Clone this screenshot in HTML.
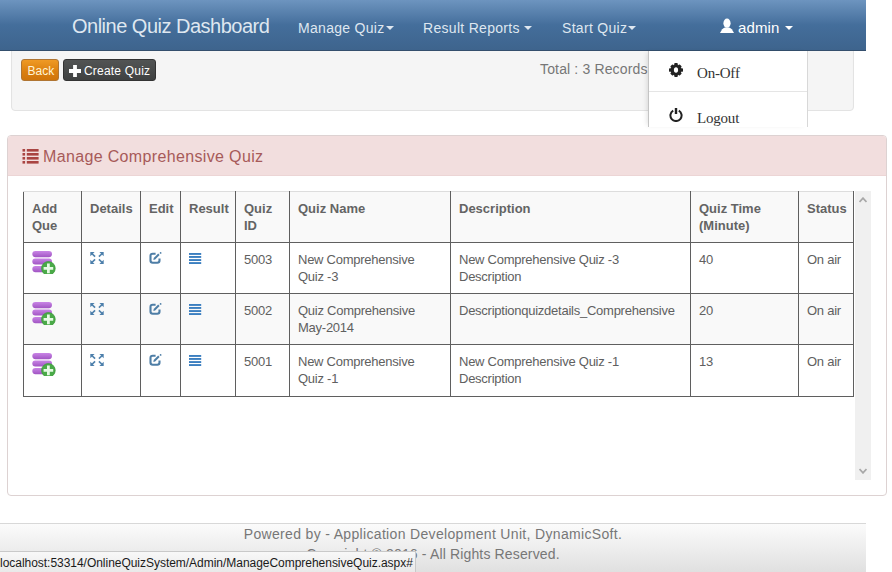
<!DOCTYPE html>
<html><head><meta charset="utf-8">
<style>
*{box-sizing:border-box;}
html,body{margin:0;padding:0;background:#fff;width:892px;height:572px;overflow:hidden;position:relative;font-family:"Liberation Sans",sans-serif;}
.abs{position:absolute;}
svg{position:absolute;display:block;}
#nav{left:0;top:0;width:866px;height:51px;background:linear-gradient(#6d94bf,#446e9b 50%,#3e648d);border-bottom:1px solid #344f6d;z-index:5;}
.nt{position:absolute;white-space:nowrap;color:#dfe7f0;font-size:14px;line-height:14px;letter-spacing:0.3px;}
.caret{position:absolute;width:0;height:0;border-left:4px solid transparent;border-right:4px solid transparent;border-top:4px solid #dfe7f0;}
#well{left:11px;top:40px;width:843px;height:71px;background:#f5f5f5;border:1px solid #e3e3e3;border-radius:4px;box-shadow:inset 0 1px 1px rgba(0,0,0,.05);}
.btn{position:absolute;height:22px;border-radius:3px;font-size:12px;line-height:20px;color:#fff;white-space:nowrap;}
#back{left:21px;top:59px;width:38px;background:linear-gradient(#ef9a25,#dc8010 55%,#cf740a);border:1px solid #b07532;color:#fff4d6;}
#create{left:63px;top:59px;width:93px;background:linear-gradient(#525454,#474949 60%,#3f4141);border:1px solid #333;}
#drop{left:648px;top:51px;width:160px;height:76px;background:#fff;border:1px solid rgba(0,0,0,.15);border-top:none;border-bottom:none;border-left-color:#c4c4c4;border-right-color:#d8d8d8;box-shadow:-3px 0 5px -2px rgba(0,0,0,.12);z-index:6;}
.dt{position:absolute;font-family:"Liberation Serif",serif;font-size:15px;line-height:15px;color:#333;white-space:nowrap;letter-spacing:-0.2px;}
#panel{left:7px;top:135px;width:880px;height:361px;border:1px solid #ddd2d2;border-radius:4px;background:#fff;}
#ph{position:absolute;left:0;top:0;width:878px;height:40px;background:#f2dede;border-bottom:1px solid #ecd5d5;border-radius:3px 3px 0 0;}
#scroll{left:855px;top:191px;width:16px;height:289px;background:#f0f0f0;}
table{position:absolute;left:23px;top:191px;width:831px;border-collapse:collapse;table-layout:fixed;}
td,th{border:1px solid #5f5f5f;padding:8px 8px 0 8px;vertical-align:top;text-align:left;font-size:13px;line-height:17px;color:#606060;}
td{letter-spacing:-0.25px;}
th{font-weight:bold;color:#646464;}
tr.h th{border-top-color:#ddd;}
#footer{left:0;top:523px;width:866px;height:49px;border-top:1px solid #d8d8d8;background:linear-gradient(#fbfbfb,#e0e0e0);}
.ft{position:absolute;left:0;width:866px;text-align:center;font-size:14px;line-height:20px;color:#777;white-space:nowrap;letter-spacing:0.33px;}
#status{left:0;top:551px;width:416px;height:21px;background:linear-gradient(#f8f8f8,#e9e9e9);border-top:1px solid #c9c9c9;border-right:1px solid #c9c9c9;font-size:12px;line-height:22px;color:#1a1a1a;white-space:nowrap;letter-spacing:-0.03px;}
</style></head>
<body>
<svg width="0" height="0" style="position:absolute">
  <defs>
    <linearGradient id="pg" x1="0" y1="0" x2="0" y2="1"><stop offset="0" stop-color="#c985e6"/><stop offset="1" stop-color="#a155c3"/></linearGradient>
    <g id="addq">
      <rect x="0.3" y="1" width="19.7" height="6.2" rx="3.1" fill="url(#pg)"/>
      <rect x="0.3" y="8.5" width="19.7" height="6.1" rx="3" fill="url(#pg)"/>
      <rect x="0.3" y="15.9" width="19.7" height="6.3" rx="3.1" fill="url(#pg)"/>
      <circle cx="16.4" cy="18.4" r="6.8" fill="#4aaa48"/>
      <circle cx="16.4" cy="18.4" r="6.8" fill="none" stroke="#3f9a3e" stroke-width="0.8"/><path d="M15 13.6h2.8v3.4h3.4v2.8h-3.4v3.4h-2.8v-3.4h-3.4v-2.8h3.4z" fill="#e6fae4"/>
    </g>
    <g id="expd" fill="#4c7fab" stroke="#4c7fab" stroke-width="1.6">
      <path d="M0 0H4.3L0 4.3Z" stroke="none"/><path d="M1.5 1.5L4.8 4.6" fill="none"/>
      <path d="M13.4 0H9.1L13.4 4.3Z" stroke="none"/><path d="M11.9 1.5L8.6 4.6" fill="none"/>
      <path d="M0 12H4.3L0 7.7Z" stroke="none"/><path d="M1.5 10.5L4.8 7.4" fill="none"/>
      <path d="M13.4 12H9.1L13.4 7.7Z" stroke="none"/><path d="M11.9 10.5L8.6 7.4" fill="none"/>
    </g>
    <g id="edt">
      <path d="M6.6 1.7H3.7Q1.5 1.7 1.5 3.9V8.6Q1.5 10.8 3.7 10.8H8.3Q10.5 10.8 10.5 8.6V6.4" fill="none" stroke="#4e7ea6" stroke-width="2.1"/>
      <path d="M4.4 8.1L4.7 6.1L9.2 1.6L10.6 3L6.1 7.5Z" fill="#4e7ea6"/>
      <circle cx="11.6" cy="0.9" r="0.9" fill="#4e7ea6"/>
    </g>
    <g id="lst" fill="#3b7fc0">
      <rect x="0" y="0" width="12.2" height="1.9"/><rect x="0" y="3" width="12.2" height="1.9"/><rect x="0" y="6.1" width="12.2" height="1.9"/><rect x="0" y="9.1" width="12.2" height="1.9"/>
    </g>
  </defs>
</svg>
<div id="nav" class="abs">
  <div class="nt" style="left:72px;top:16px;font-size:20px;line-height:20px;letter-spacing:-0.5px;">Online Quiz Dashboard</div>
  <div class="nt" style="left:298px;top:21px;">Manage Quiz</div><div class="caret" style="left:386px;top:26px;"></div>
  <div class="nt" style="left:423px;top:21px;">Result Reports</div><div class="caret" style="left:524px;top:26px;"></div>
  <div class="nt" style="left:562px;top:21px;">Start Quiz</div><div class="caret" style="left:628px;top:26px;"></div>
  <svg style="left:719px;top:18px" width="16" height="16" viewBox="0 0 16 16"><ellipse cx="8" cy="5.2" rx="3.6" ry="4.6" fill="#fff"/><path d="M1 15 L3.2 11.2 Q5 9.6 6 9.5 L10 9.5 Q11 9.6 12.8 11.2 L15 15 Z" fill="#fff"/></svg>
  <div class="nt" style="left:738px;top:20px;color:#fff;font-size:15px;line-height:15px;letter-spacing:0.1px;">admin</div><div class="caret" style="left:785px;top:26px;border-top-color:#fff;"></div>
</div>
<div id="well" class="abs"></div>
<div id="back" class="btn"><span class="abs" style="left:5.5px;top:1px;">Back</span></div>
<div id="create" class="btn">
  <svg style="left:5px;top:5px" width="12" height="12" viewBox="0 0 12 12"><path d="M4.1 0H7.9V4.1H12V7.9H7.9V12H4.1V7.9H0V4.1H4.1Z" fill="#fff"/></svg>
  <span class="abs" style="left:20px;top:1px;letter-spacing:0.2px;">Create Quiz</span></div>
<div class="abs" style="left:540px;top:62px;font-size:14px;line-height:14px;color:#777;white-space:nowrap;letter-spacing:0.15px;">Total : 3 Records</div>
<div id="drop" class="abs">
  <svg style="left:20px;top:12px" width="14" height="14" viewBox="0 0 14 14"><g fill="#222"><circle cx="7" cy="7" r="5.3"/><rect x="5.2" y="0" width="3.6" height="14" rx=".9"/><rect x="0" y="5.2" width="14" height="3.6" rx=".9"/><rect x="5.2" y="0.4" width="3.6" height="13.2" rx=".9" transform="rotate(45 7 7)"/><rect x="5.2" y="0.4" width="3.6" height="13.2" rx=".9" transform="rotate(-45 7 7)"/></g><ellipse cx="7" cy="7" rx="2.1" ry="2.8" fill="#fff"/></svg>
  <div class="dt" style="left:48px;top:15px;">On-Off</div>
  <div class="abs" style="left:0;top:40px;width:158px;height:1px;background:#e5e5e5;"></div>
  <svg style="left:20px;top:57px" width="14" height="14" viewBox="0 0 14 14"><path d="M4.2 2.6 A5.6 5.6 0 1 0 9.8 2.6" fill="none" stroke="#222" stroke-width="2"/><rect x="5.8" y="0" width="2.4" height="6" fill="#222"/></svg>
  <div class="dt" style="left:48px;top:60px;">Logout</div>
</div>
<div id="panel" class="abs">
  <div id="ph">
    <svg style="left:14px;top:12px" width="18" height="16" viewBox="0 0 18 16"><g fill="#a94442"><rect x="0.5" y="1" width="2.6" height="2.6"/><rect x="4.8" y="1" width="11.8" height="2.6"/><rect x="0.5" y="5" width="2.6" height="2.6"/><rect x="4.8" y="5" width="11.8" height="2.6"/><rect x="0.5" y="9" width="2.6" height="2.6"/><rect x="4.8" y="9" width="11.8" height="2.6"/><rect x="0.5" y="13" width="2.6" height="2.6"/><rect x="4.8" y="13" width="11.8" height="2.6"/></g></svg>
    <div class="abs" style="left:35px;top:13px;font-size:16px;line-height:16px;color:#a75a59;white-space:nowrap;letter-spacing:0.35px;">Manage Comprehensive Quiz</div></div>
</div>
<div id="scroll" class="abs">
  <svg style="left:4px;top:6px" width="8" height="6" viewBox="0 0 8 6"><path d="M0.5 5L4 1.2L7.5 5" fill="none" stroke="#a8a8a8" stroke-width="1.8"/></svg>
  <svg style="left:4px;top:277px" width="8" height="6" viewBox="0 0 8 6"><path d="M0.5 1L4 4.8L7.5 1" fill="none" stroke="#a8a8a8" stroke-width="1.8"/></svg>
</div>
<table>
<colgroup><col style="width:58px"><col style="width:59px"><col style="width:40px"><col style="width:55px"><col style="width:54px"><col style="width:161px"><col style="width:240px"><col style="width:108px"><col style="width:55px"></colgroup>
<tr class="h" style="height:51px;background:#f9f9f9;"><th>Add<br>Que</th><th>Details</th><th>Edit</th><th>Result</th><th>Quiz<br>ID</th><th>Quiz Name</th><th>Description</th><th>Quiz Time<br>(Minute)</th><th>Status</th></tr>
<tr style="height:51px;"><td></td><td></td><td></td><td></td><td>5003</td><td>New Comprehensive<br>Quiz -3</td><td>New Comprehensive Quiz -3<br>Description</td><td>40</td><td>On air</td></tr>
<tr style="height:51px;background:#f9f9f9;"><td></td><td></td><td></td><td></td><td>5002</td><td>Quiz Comprehensive<br>May-2014</td><td>Descriptionquizdetails_Comprehensive</td><td>20</td><td>On air</td></tr>
<tr style="height:52px;"><td></td><td></td><td></td><td></td><td>5001</td><td>New Comprehensive<br>Quiz -1</td><td>New Comprehensive Quiz -1<br>Description</td><td>13</td><td>On air</td></tr>
</table>
<svg style="left:32px;top:250px" width="24" height="24" viewBox="0 0 24 24"><use href="#addq"/></svg>
<svg style="left:32px;top:301px" width="24" height="24" viewBox="0 0 24 24"><use href="#addq"/></svg>
<svg style="left:32px;top:352px" width="24" height="24" viewBox="0 0 24 24"><use href="#addq"/></svg>
<svg style="left:90px;top:252px" width="14" height="12" viewBox="0 0 13.4 12"><use href="#expd"/></svg>
<svg style="left:90px;top:303px" width="14" height="12" viewBox="0 0 13.4 12"><use href="#expd"/></svg>
<svg style="left:90px;top:354px" width="14" height="12" viewBox="0 0 13.4 12"><use href="#expd"/></svg>
<svg style="left:149px;top:252px" width="13" height="12" viewBox="0 0 13 12"><use href="#edt"/></svg>
<svg style="left:149px;top:303px" width="13" height="12" viewBox="0 0 13 12"><use href="#edt"/></svg>
<svg style="left:149px;top:354px" width="13" height="12" viewBox="0 0 13 12"><use href="#edt"/></svg>
<svg style="left:189px;top:253px" width="13" height="11" viewBox="0 0 13 11"><use href="#lst"/></svg>
<svg style="left:189px;top:304px" width="13" height="11" viewBox="0 0 13 11"><use href="#lst"/></svg>
<svg style="left:189px;top:355px" width="13" height="11" viewBox="0 0 13 11"><use href="#lst"/></svg>
<div id="footer" class="abs">
  <div class="ft" style="top:0px;">Powered by - Application Development Unit, DynamicSoft.</div>
  <div class="ft" style="top:20px;letter-spacing:0.15px;">Copyright © 2016 - All Rights Reserved.</div>
</div>
<div id="status" class="abs">localhost:53314/OnlineQuizSystem/Admin/ManageComprehensiveQuiz.aspx#</div>
</body></html>
